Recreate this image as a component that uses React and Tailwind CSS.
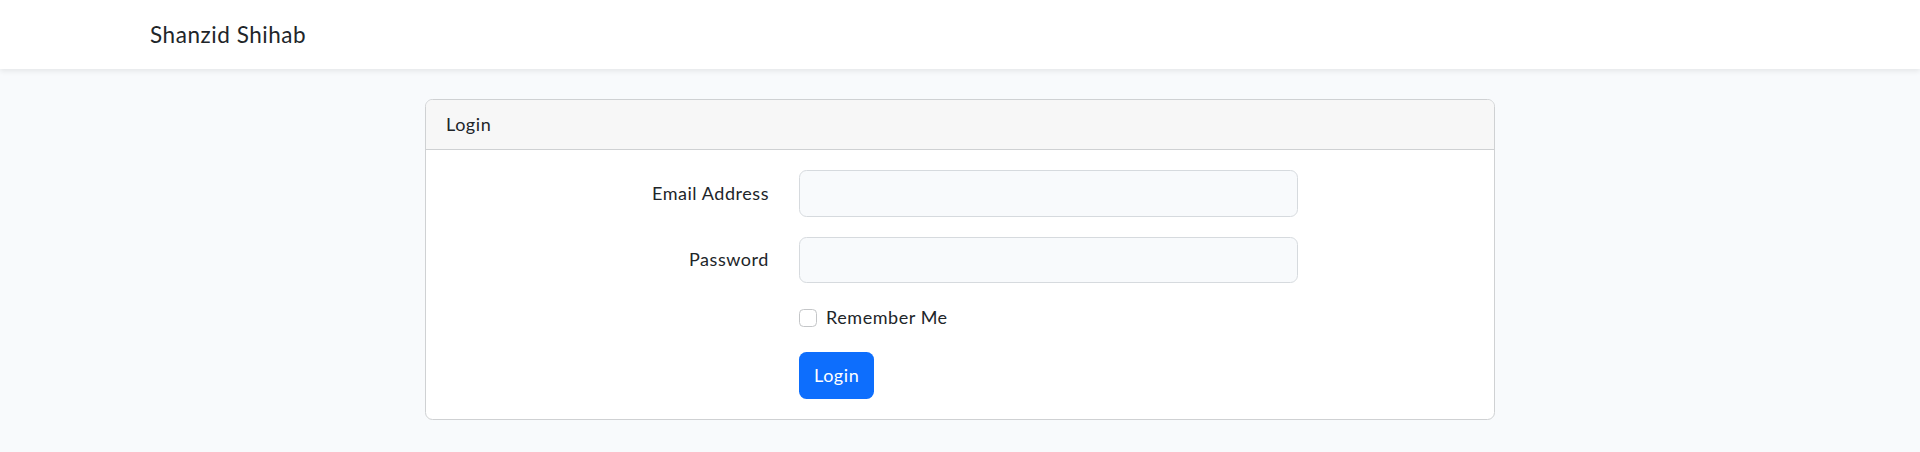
import React from "react";

const App = () => {
  return (
    <div className="min-h-screen bg-[#f8fafc] text-[#212529] font-['Lato','Noto_Sans',sans-serif] text-[18px] leading-[28.8px] tracking-[0.55px]">
      {/* Navbar */}
      <nav className="h-[69px] bg-white shadow-[0_2.5px_5px_rgba(0,0,0,0.075)] relative z-10">
        <div className="max-w-[1650px] mx-auto px-[15px] h-full flex items-center">
          <a href="#" className="text-[22.5px] leading-[36px] text-[#212529]">
            Shanzid Shihab
          </a>
        </div>
      </nav>

      {/* Main */}
      <main className="py-[30px]">
        <div className="max-w-[1650px] mx-auto px-[15px]">
          <div className="w-[1070px] mx-auto bg-white border border-[#cfd1d3] rounded-[7.5px] overflow-hidden">
            <div className="bg-[#f7f7f7] border-b border-[#cfd1d3] px-[20px] h-[50px] flex items-center">
              Login
            </div>

            <div className="p-[20px]">
              <form className="grid grid-cols-[323px_499px] gap-x-[30px] gap-y-[20px]">
                <label className="text-right self-center">Email Address</label>
                <input
                  type="email"
                  className="h-[46.5px] rounded-[7.5px] border border-[#d6dade] bg-[#f8fafc] px-[15px] outline-none"
                />

                <label className="text-right self-center">Password</label>
                <input
                  type="password"
                  className="h-[46.5px] rounded-[7.5px] border border-[#d6dade] bg-[#f8fafc] px-[15px] outline-none"
                />

                <div />
                <div className="flex items-start h-[29px]">
                  <span className="mt-[5.5px] w-[18px] h-[18px] rounded-[4.5px] border border-[#c4c6c8] bg-white" />
                  <span className="ml-[9px]">Remember Me</span>
                </div>

                <div />
                <div>
                  <button
                    type="button"
                    className="h-[46.5px] px-[15px] rounded-[7.5px] bg-[#0d6efd] text-white tracking-[0.55px]"
                  >
                    Login
                  </button>
                </div>
              </form>
            </div>
          </div>
        </div>
      </main>
    </div>
  );
};

export default App;
